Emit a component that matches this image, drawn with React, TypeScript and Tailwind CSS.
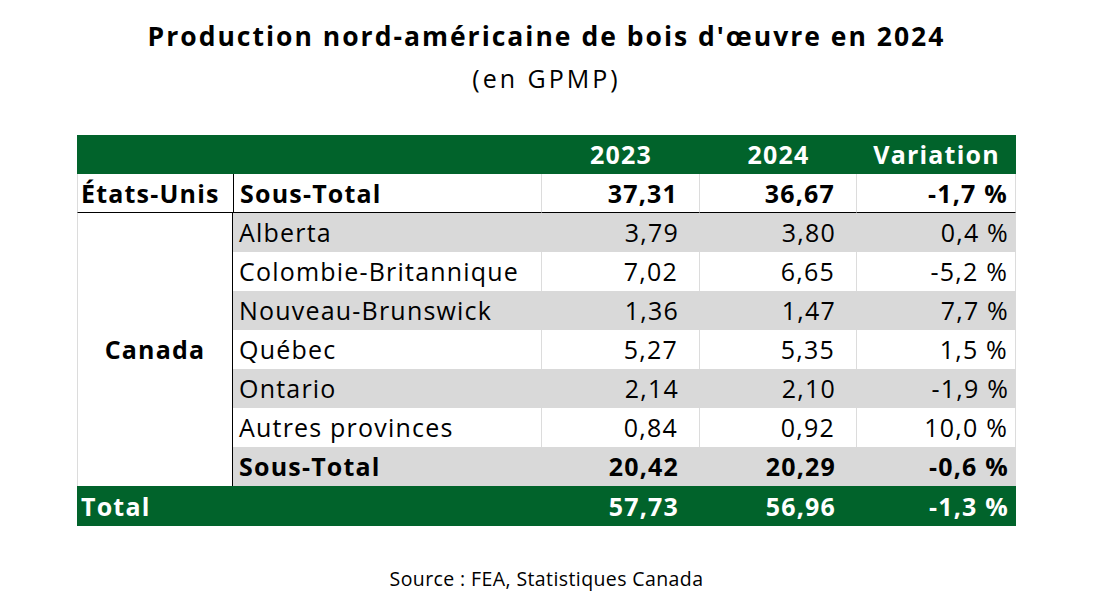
const GREEN = "bg-[#01632b]";

type Row = {
  name: string;
  y23: string;
  y24: string;
  v: string;
  shade?: boolean;
  bold?: boolean;
};

const canada: Row[] = [
  { name: "Alberta", y23: "3,79", y24: "3,80", v: "0,4 %", shade: true },
  { name: "Colombie-Britannique", y23: "7,02", y24: "6,65", v: "-5,2 %" },
  { name: "Nouveau-Brunswick", y23: "1,36", y24: "1,47", v: "7,7 %", shade: true },
  { name: "Québec", y23: "5,27", y24: "5,35", v: "1,5 %" },
  { name: "Ontario", y23: "2,14", y24: "2,10", v: "-1,9 %", shade: true },
  { name: "Autres provinces", y23: "0,84", y24: "0,92", v: "10,0 %" },
  { name: "Sous-Total", y23: "20,42", y24: "20,29", v: "-0,6 %", shade: true, bold: true },
];

function DataRow({ row }: { row: Row }) {
  const bg = row.shade ? "bg-[#d9d9d9]" : "bg-white";
  const weight = row.bold ? "font-bold" : "font-normal";
  const line = row.shade ? "" : "border-r border-[#dcdcdc]";
  return (
    <>
      <div className={`${bg} ${weight} ${line} h-[39px] flex items-center pl-[6px]`}>{row.name}</div>
      <div className={`${bg} ${weight} ${line} h-[39px] flex items-center justify-end pr-[21px]`}>{row.y23}</div>
      <div className={`${bg} ${weight} ${line} h-[39px] flex items-center justify-end pr-[21px]`}>{row.y24}</div>
      <div className={`${bg} ${weight} ${line} h-[39px] flex items-center justify-end pr-[7px]`}>{row.v}</div>
    </>
  );
}

export default function App() {
  return (
    <div
      className="w-[1116px] h-[611px] bg-white text-black overflow-hidden"
      style={{ fontFamily: '"Open Sans", "Noto Sans", sans-serif' }}
    >
      <div className="w-[939px] ml-[77px] flex flex-col">
        <div className="pt-[18px] text-center">
          <h1 className="text-[26.5px] font-bold leading-[36px] tracking-[2px] whitespace-nowrap">
            Production nord-américaine de bois d'œuvre en 2024
          </h1>
          <p className="text-[25px] leading-[36px] mt-[6px] tracking-[3px]">(en GPMP)</p>
        </div>

        <div className="mt-[39px] grid grid-cols-[156px_309px_158px_157px_159px] text-[25px] leading-none tracking-[1.2px]">
          {/* header */}
          <div className={`${GREEN} col-span-2 h-[39px]`} />
          <div className={`${GREEN} h-[39px] flex items-center justify-center text-white font-bold`}>2023</div>
          <div className={`${GREEN} h-[39px] flex items-center justify-center text-white font-bold`}>2024</div>
          <div className={`${GREEN} h-[39px] flex items-center justify-center text-white font-bold`}>Variation</div>

          {/* United States */}
          <div className="h-[39px] border-b border-black border-l border-l-[#dcdcdc] flex items-center pl-[3px] font-bold">
            États-Unis
          </div>
          <div className="h-[39px] border-b border-black border-l border-l-black border-r border-r-[#dcdcdc] flex items-center pl-[6px] font-bold">
            Sous-Total
          </div>
          <div className="h-[39px] border-b border-black border-r border-r-[#dcdcdc] flex items-center justify-end pr-[21px] font-bold">
            37,31
          </div>
          <div className="h-[39px] border-b border-black border-r border-r-[#dcdcdc] flex items-center justify-end pr-[21px] font-bold">
            36,67
          </div>
          <div className="h-[39px] border-b border-black border-r border-r-[#dcdcdc] flex items-center justify-end pr-[7px] font-bold">
            -1,7 %
          </div>

          {/* Canada */}
          <div className="row-span-7 border-l border-[#dcdcdc] border-r border-r-black flex items-center justify-center font-bold">
            Canada
          </div>
          {canada.map((r) => (
            <DataRow key={r.name} row={r} />
          ))}

          {/* total */}
          <div className={`${GREEN} col-span-2 h-[40px] flex items-center pl-[4px] text-white font-bold`}>Total</div>
          <div className={`${GREEN} h-[40px] flex items-center justify-end pr-[21px] text-white font-bold`}>57,73</div>
          <div className={`${GREEN} h-[40px] flex items-center justify-end pr-[21px] text-white font-bold`}>56,96</div>
          <div className={`${GREEN} h-[40px] flex items-center justify-end pr-[7px] text-white font-bold`}>-1,3 %</div>
        </div>

        <p className="mt-[41px] text-center text-[19.5px] leading-[24px] tracking-[0.4px]">
          Source : FEA, Statistiques Canada
        </p>
      </div>
    </div>
  );
}
